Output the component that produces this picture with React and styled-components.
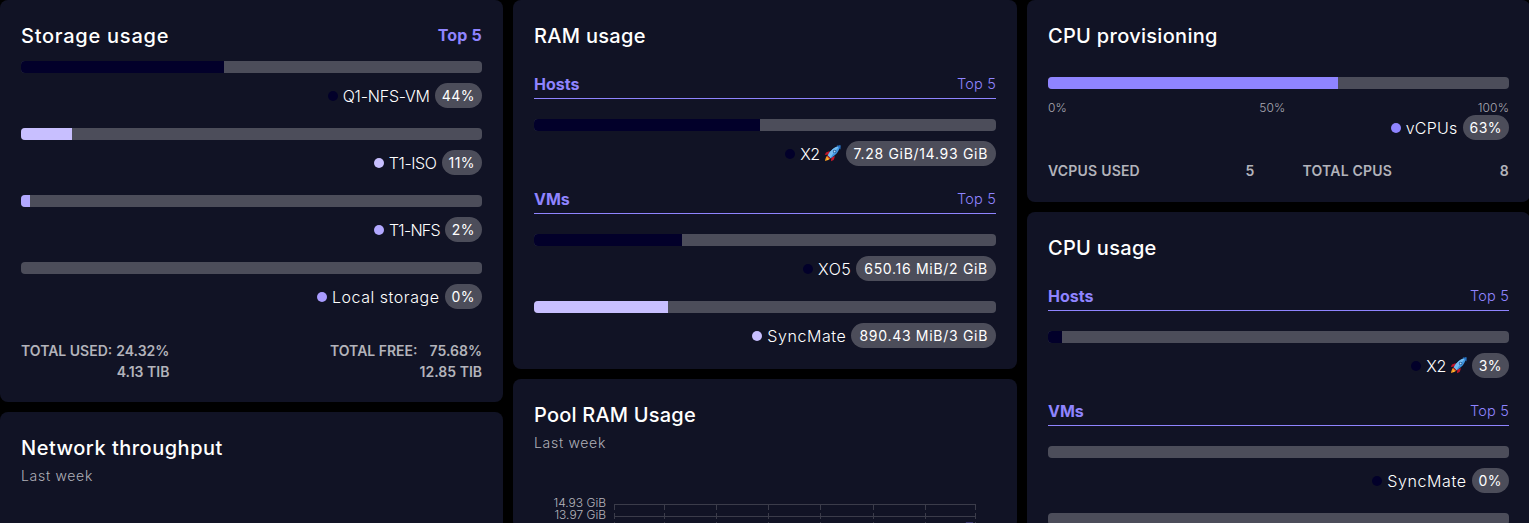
import React from 'react'
import styled, { createGlobalStyle } from 'styled-components'

const GlobalStyle = createGlobalStyle`
    html, body {
        margin: 0;
        height: 100%;
        overflow: hidden;
        background: #000;
    }
    * {
        box-sizing: border-box;
    }
`

const Page = styled.main`
    display: grid;
    grid-template-columns: 503px 504px 503px;
    column-gap: 10px;
    align-items: start;
    width: 1529px;
    height: 523px;
    overflow: hidden;
    font-family: Inter, 'Noto Sans', sans-serif;
    color: #fff;
`

const Column = styled.div`
    display: flex;
    flex-direction: column;
    gap: 10px;
    min-width: 0;
`

const Card = styled.section`
    padding: 21px;
    border-radius: 8px;
    background: #111325;
`

const CardHead = styled.header`
    display: flex;
    justify-content: space-between;
    align-items: center;
    height: 30px;
    margin-bottom: ${props => props.$gap ?? 10}px;
`

const Title = styled.h2`
    margin: 0;
    font-size: 20px;
    font-weight: 450;
    letter-spacing: ${props => props.$spread ?? 0.3}px;
    line-height: 30px;
`

const CardTop = styled.span`
    padding-bottom: 2px;
    color: #8f84ff;
    font-size: 16px;
    font-weight: 700;
    letter-spacing: 0.2px;
`

const Subtitle = styled.p`
    margin: 3px 0 0;
    color: #b0b0b9;
    font-size: 14px;
    font-weight: 300;
    letter-spacing: 0.7px;
    line-height: 20px;
`

const SectionHead = styled.div`
    display: flex;
    justify-content: space-between;
    align-items: center;
    height: 28px;
    margin-bottom: 20px;
    padding-bottom: 2px;
    border-bottom: 1px solid #8f84ff;
    color: #8f84ff;
`

const SectionName = styled.span`
    font-size: 16px;
    font-weight: 700;
`

const SectionTop = styled.span`
    font-size: 14.5px;
    font-weight: 300;
    letter-spacing: 0.2px;
`

const Items = styled.div`
    display: flex;
    flex-direction: column;
    gap: 20px;
    margin-bottom: ${props => props.$end ? 0 : 20}px;
`

const Track = styled.div`
    height: 12px;
    border-radius: 4px;
    background: #4c4d5a;
    overflow: hidden;
`

const Fill = styled.div`
    height: 100%;
    width: ${props => props.$value}%;
    background: ${props => props.$color};
`

const Legend = styled.div`
    display: flex;
    justify-content: flex-end;
    align-items: center;
    gap: 5px;
    height: 25px;
    margin-top: ${props => props.$flush ? 0 : 10}px;
`

const Dot = styled.i`
    width: 10px;
    height: 10px;
    border-radius: 50%;
    background: ${props => props.$color};
`

const Label = styled.span`
    display: flex;
    align-items: center;
    gap: 4px;
    font-size: 16px;
    font-weight: 350;
    letter-spacing: ${props => props.$spread ?? 0.25}px;
`

const Pill = styled.span`
    display: flex;
    align-items: center;
    height: 25px;
    padding: 0 ${props => props.$wide ? 8 : 7}px 1px;
    border-radius: 13px;
    background: #4c4d5a;
    font-size: 14px;
    font-weight: 400;
    letter-spacing: ${props => props.$wide ? 0.7 : 0.45}px;
`

const Scale = styled.div`
    display: flex;
    justify-content: space-between;
    margin-top: 11px;
    color: #a9a9b2;
    font-size: 12px;
    font-weight: 300;
    letter-spacing: 0.1px;
    line-height: 15px;
`

const Provisioning = styled.div`
    margin-top: 26px;
`

const StatGrid = styled.div`
    display: grid;
    grid-template-columns: 1fr 1fr;
    column-gap: 48px;
    margin-top: 20px;
`

const Stat = styled.div`
    display: flex;
    justify-content: space-between;
    color: #b3b3bb;
    font-size: 14px;
    font-weight: 600;
    letter-spacing: 0.2px;
    line-height: 21px;
`

const Totals = styled.footer`
    display: flex;
    justify-content: space-between;
    margin: 31px 0 -1px;
    color: #b3b3bb;
    font-size: 14px;
    font-weight: 600;
    line-height: 21px;
    text-transform: uppercase;
`

const TotalBlock = styled.div`
    display: flex;
    flex-direction: column;
    align-items: flex-end;
`

const TotalLine = styled.div`
    display: flex;
    gap: ${props => props.$gap}px;
`

const ChartSlot = styled.div`
    height: 260px;
`

const ChartBox = styled.div`
    margin: 0 0 -21px -21px;
`

const ChartText = styled.text`
    fill: #b5b5bc;
    font-size: 12px;
    font-weight: 300;
    text-anchor: end;
`

const GridLine = styled.line`
    stroke: #3b3c4a;
    stroke-width: 1;
    stroke-dasharray: ${props => props.$dash ? '6 3' : 'none'};
`

const DARK = '#02002a'
const LIGHT = '#c8bfff'
const MID = '#b2a8ff'
const SOFT = '#a99cff'
const PURPLE = '#8f84ff'

const Rocket = () => (
    <svg width="17" height="17" viewBox="0 0 17 17" aria-hidden="true">
        <path d="M3.4 10.6 C2.2 11.6 1.3 13.8 1 16 C3.2 15.7 5.4 14.8 6.4 13.6 Z" fill="#f79a1e" />
        <path d="M3.6 13.4 C3.2 14 2.9 14.6 2.8 15 C3.4 14.9 4 14.6 4.6 14.2 Z" fill="#fcd34d" />
        <path d="M5.8 6 L2 7.4 L0.8 10 L4.8 9.6 Z" fill="#c4162a" />
        <path d="M11 11.2 L9.6 15 L7 16.2 L7.4 12.2 Z" fill="#c4162a" />
        <path d="M3.8 10.4 C6 6 10 2 16.4 0.6 C15 7 11 11 6.6 13.2 Z" fill="#3f96e0" />
        <path d="M3.8 10.4 C6 6 10 2 16.4 0.6 C12 5 8 9.4 6.6 13.2 Z" fill="#74bcf0" />
        <path d="M12.6 0.6 C14 0.4 15.4 0.4 16.6 0.4 C16.6 1.6 16.6 3 16.4 4.4 Z" fill="#2574c8" />
        <circle cx="10.6" cy="6.4" r="1.7" fill="#1d4f91" />
        <circle cx="10.6" cy="6.4" r="1" fill="#a9dcf7" />
        <path d="M3.8 10.4 L6.6 13.2 L5.6 13.8 L3.2 11.4 Z" fill="#a3142a" />
    </svg>
)

const UsageItem = ({ name, value, width, color, rocket, spread }) => (
    <div>
        <Track>
            <Fill $value={width} $color={color} />
        </Track>
        <Legend>
            <Dot $color={color} />
            <Label $spread={spread}>
                {name}
                {rocket && <Rocket />}
            </Label>
            <Pill $wide={value.length > 4}>{value}</Pill>
        </Legend>
    </div>
)

const UsageSection = ({ name, items, end, children }) => (
    <>
        <SectionHead>
            <SectionName>{name}</SectionName>
            <SectionTop>Top 5</SectionTop>
        </SectionHead>
        <Items $end={end}>
            {items.map(item => (
                <UsageItem key={item.name} {...item} />
            ))}
            {children}
        </Items>
    </>
)

const storage = [
    { name: 'Q1-NFS-VM', value: '44%', width: 44, color: DARK, spread: -0.2 },
    { name: 'T1-ISO', value: '11%', width: 11, color: LIGHT, spread: -0.4 },
    { name: 'T1-NFS', value: '2%', width: 2, color: MID, spread: -0.75 },
    { name: 'Local storage', value: '0%', width: 0, color: SOFT, spread: 0.55 },
]

const ramHosts = [{ name: 'X2', rocket: true, value: '7.28 GiB/14.93 GiB', width: 48.9, color: DARK, spread: -0.5 }]
const ramVms = [
    { name: 'XO5', value: '650.16 MiB/2 GiB', width: 32, color: DARK, spread: 0.5 },
    { name: 'SyncMate', value: '890.43 MiB/3 GiB', width: 29, color: LIGHT, spread: 0.6 },
]
const cpuHosts = [{ name: 'X2', rocket: true, value: '3%', width: 3, color: DARK, spread: -0.5 }]
const cpuVms = [{ name: 'SyncMate', value: '0%', width: 0, color: DARK, spread: 0.6 }]

const chartColumns = [101.5, 151.5, 203.5, 255.5, 307.5, 360.5, 412.5, 462.5]

const PoolChart = () => (
    <ChartBox>
        <svg width="504" height="72" viewBox="0 0 504 72" aria-hidden="true">
            <ChartText x="93" y="54">14.93 GiB</ChartText>
            <ChartText x="93" y="66">13.97 GiB</ChartText>
            <GridLine x1="101" x2="463" y1="51.5" y2="51.5" />
            <GridLine x1="101" x2="463" y1="63.5" y2="63.5" />
            {chartColumns.map(x => (
                <GridLine key={x} $dash x1={x} x2={x} y1="51" y2="72" />
            ))}
            <path d="M452 72 L453 69 L460 69 L461 72 Z" fill="#8f84ff" fillOpacity="0.35" />
        </svg>
    </ChartBox>
)

export default function App() {
    return (
        <>
            <GlobalStyle />
            <Page>
                <Column>
                    <Card>
                        <CardHead>
                            <Title $spread={0.75}>Storage usage</Title>
                            <CardTop>Top 5</CardTop>
                        </CardHead>
                        <Items $end>
                            {storage.map(item => (
                                <UsageItem key={item.name} {...item} />
                            ))}
                        </Items>
                        <Totals>
                            <TotalBlock>
                                <TotalLine $gap={4}>
                                    <span>Total used:</span>
                                    <span>24.32%</span>
                                </TotalLine>
                                <span>4.13 TiB</span>
                            </TotalBlock>
                            <TotalBlock>
                                <TotalLine $gap={12}>
                                    <span>Total free:</span>
                                    <span>75.68%</span>
                                </TotalLine>
                                <span>12.85 TiB</span>
                            </TotalBlock>
                        </Totals>
                    </Card>
                    <Card>
                        <Title $spread={0.5}>Network throughput</Title>
                        <Subtitle>Last week</Subtitle>
                        <ChartSlot />
                    </Card>
                </Column>
                <Column>
                    <Card>
                        <CardHead $gap={20}>
                            <Title>RAM usage</Title>
                        </CardHead>
                        <UsageSection name="Hosts" items={ramHosts} />
                        <UsageSection name="VMs" items={ramVms} end />
                    </Card>
                    <Card>
                        <Title $spread={0.2}>Pool RAM Usage</Title>
                        <Subtitle>Last week</Subtitle>
                        <PoolChart />
                    </Card>
                </Column>
                <Column>
                    <Card>
                        <Title>CPU provisioning</Title>
                        <Provisioning>
                            <Track>
                                <Fill $value={63} $color={PURPLE} />
                            </Track>
                            <Scale>
                                <span>0%</span>
                                <span>50%</span>
                                <span>100%</span>
                            </Scale>
                            <Legend $flush>
                                <Dot $color={PURPLE} />
                                <Label>vCPUs</Label>
                                <Pill>63%</Pill>
                            </Legend>
                        </Provisioning>
                        <StatGrid>
                            <Stat>
                                <span>VCPUS USED</span>
                                <span>5</span>
                            </Stat>
                            <Stat>
                                <span>TOTAL CPUS</span>
                                <span>8</span>
                            </Stat>
                        </StatGrid>
                    </Card>
                    <Card>
                        <CardHead $gap={20}>
                            <Title>CPU usage</Title>
                        </CardHead>
                        <UsageSection name="Hosts" items={cpuHosts} />
                        <UsageSection name="VMs" items={cpuVms} end>
                            <Track />
                        </UsageSection>
                    </Card>
                </Column>
            </Page>
        </>
    )
}
